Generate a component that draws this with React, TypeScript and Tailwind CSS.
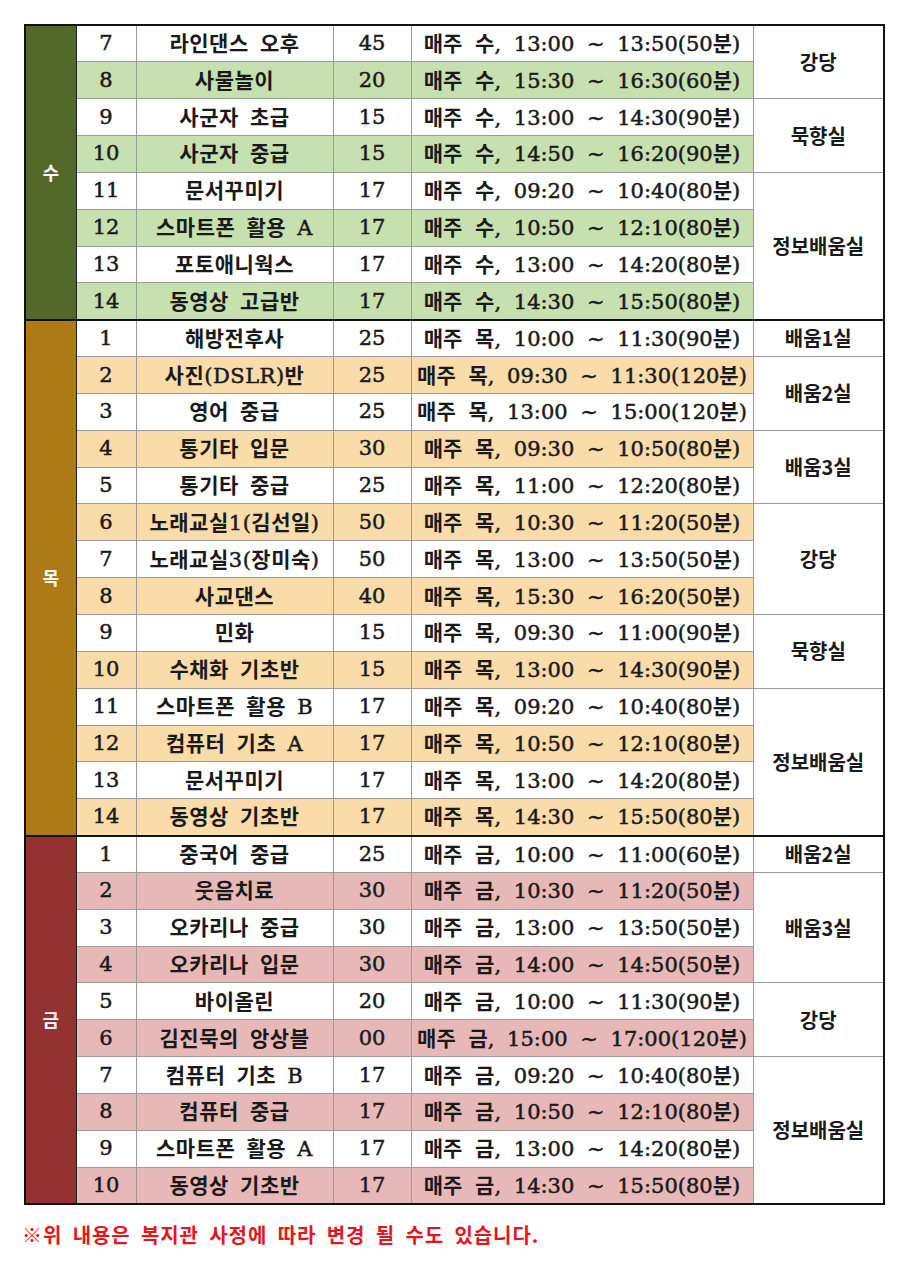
import React from 'react';

type Row = { no: string; name: string; count: string; time: string; room?: string; span?: number };

type Day = { label: string; dark: string; light: string; rows: Row[] };

const days: Day[] = [
  {
    label: '수',
    dark: 'bg-[#52692a]',
    light: 'bg-[#c6e0b0]',
    rows: [
      { no: '7', name: '라인댄스 오후', count: '45', time: '매주 수, 13:00 ~ 13:50(50분)', room: '강당', span: 2 },
      { no: '8', name: '사물놀이', count: '20', time: '매주 수, 15:30 ~ 16:30(60분)' },
      { no: '9', name: '사군자 초급', count: '15', time: '매주 수, 13:00 ~ 14:30(90분)', room: '묵향실', span: 2 },
      { no: '10', name: '사군자 중급', count: '15', time: '매주 수, 14:50 ~ 16:20(90분)' },
      { no: '11', name: '문서꾸미기', count: '17', time: '매주 수, 09:20 ~ 10:40(80분)', room: '정보배움실', span: 4 },
      { no: '12', name: '스마트폰 활용 A', count: '17', time: '매주 수, 10:50 ~ 12:10(80분)' },
      { no: '13', name: '포토애니웍스', count: '17', time: '매주 수, 13:00 ~ 14:20(80분)' },
      { no: '14', name: '동영상 고급반', count: '17', time: '매주 수, 14:30 ~ 15:50(80분)' },
    ],
  },
  {
    label: '목',
    dark: 'bg-[#ad7a16]',
    light: 'bg-[#f9dcaa]',
    rows: [
      { no: '1', name: '해방전후사', count: '25', time: '매주 목, 10:00 ~ 11:30(90분)', room: '배움1실', span: 1 },
      { no: '2', name: '사진(DSLR)반', count: '25', time: '매주 목, 09:30 ~ 11:30(120분)', room: '배움2실', span: 2 },
      { no: '3', name: '영어 중급', count: '25', time: '매주 목, 13:00 ~ 15:00(120분)' },
      { no: '4', name: '통기타 입문', count: '30', time: '매주 목, 09:30 ~ 10:50(80분)', room: '배움3실', span: 2 },
      { no: '5', name: '통기타 중급', count: '25', time: '매주 목, 11:00 ~ 12:20(80분)' },
      { no: '6', name: '노래교실1(김선일)', count: '50', time: '매주 목, 10:30 ~ 11:20(50분)', room: '강당', span: 3 },
      { no: '7', name: '노래교실3(장미숙)', count: '50', time: '매주 목, 13:00 ~ 13:50(50분)' },
      { no: '8', name: '사교댄스', count: '40', time: '매주 목, 15:30 ~ 16:20(50분)' },
      { no: '9', name: '민화', count: '15', time: '매주 목, 09:30 ~ 11:00(90분)', room: '묵향실', span: 2 },
      { no: '10', name: '수채화 기초반', count: '15', time: '매주 목, 13:00 ~ 14:30(90분)' },
      { no: '11', name: '스마트폰 활용 B', count: '17', time: '매주 목, 09:20 ~ 10:40(80분)', room: '정보배움실', span: 4 },
      { no: '12', name: '컴퓨터 기초 A', count: '17', time: '매주 목, 10:50 ~ 12:10(80분)' },
      { no: '13', name: '문서꾸미기', count: '17', time: '매주 목, 13:00 ~ 14:20(80분)' },
      { no: '14', name: '동영상 기초반', count: '17', time: '매주 목, 14:30 ~ 15:50(80분)' },
    ],
  },
  {
    label: '금',
    dark: 'bg-[#943232]',
    light: 'bg-[#e6b8b8]',
    rows: [
      { no: '1', name: '중국어 중급', count: '25', time: '매주 금, 10:00 ~ 11:00(60분)', room: '배움2실', span: 1 },
      { no: '2', name: '웃음치료', count: '30', time: '매주 금, 10:30 ~ 11:20(50분)', room: '배움3실', span: 3 },
      { no: '3', name: '오카리나 중급', count: '30', time: '매주 금, 13:00 ~ 13:50(50분)' },
      { no: '4', name: '오카리나 입문', count: '30', time: '매주 금, 14:00 ~ 14:50(50분)' },
      { no: '5', name: '바이올린', count: '20', time: '매주 금, 10:00 ~ 11:30(90분)', room: '강당', span: 2 },
      { no: '6', name: '김진묵의 앙상블', count: '00', time: '매주 금, 15:00 ~ 17:00(120분)' },
      { no: '7', name: '컴퓨터 기초 B', count: '17', time: '매주 금, 09:20 ~ 10:40(80분)', room: '정보배움실', span: 4 },
      { no: '8', name: '컴퓨터 중급', count: '17', time: '매주 금, 10:50 ~ 12:10(80분)' },
      { no: '9', name: '스마트폰 활용 A', count: '17', time: '매주 금, 13:00 ~ 14:20(80분)' },
      { no: '10', name: '동영상 기초반', count: '17', time: '매주 금, 14:30 ~ 15:50(80분)' },
    ],
  },
];

// hangul runs in bold gothic, the rest in a serif face like the original sheet
function Mixed({ text }: { text: string }) {
  const parts = text.split(/([가-힣]+)/);
  return (
    <>
      {parts.map((p, i) =>
        /[가-힣]/.test(p) ? (
          <span key={i} className="font-bold font-['Noto_Sans_CJK_KR',sans-serif]">
            {p}
          </span>
        ) : (
          <span key={i} className="font-normal [-webkit-text-stroke:0.5px_#1a1a1a]">
            {p}
          </span>
        )
      )}
    </>
  );
}

export default function App() {
  return (
    <div className="w-[905px] h-[1279px] bg-white text-[#1a1a1a] font-['DejaVu_Serif','Noto_Sans_CJK_KR',serif]">
      <div className="pl-[24px] pt-[24px]">
        <table className="border-collapse border-2 border-[#111] table-fixed w-[859px]">
          <colgroup>
            <col className="w-[51px]" />
            <col className="w-[60px]" />
            <col className="w-[197px]" />
            <col className="w-[78px]" />
            <col className="w-[342px]" />
            <col className="w-[131px]" />
          </colgroup>
          <tbody>
            {days.map((day) =>
              day.rows.map((row, i) => {
                const bg = i % 2 === 1 ? day.light : 'bg-white';
                const top = i === 0 ? 'border-t-2 border-t-[#111]' : '';
                const cell = `border border-[#9a9a9a] ${bg} ${top} text-center text-[21px] leading-none p-0 whitespace-nowrap`;
                return (
                  <tr key={day.label + row.no} className="h-[36.85px]">
                    {i === 0 && (
                      <td
                        rowSpan={day.rows.length}
                        className={`${day.dark} border-t-2 border-t-[#111] border-r border-r-[#222] text-center align-middle text-white font-bold text-[18px] font-['Noto_Sans_CJK_KR',sans-serif]`}
                      >
                        {day.label}
                      </td>
                    )}
                    <td className={cell}>
                      <Mixed text={row.no} />
                    </td>
                    <td className={`${cell} tracking-[0.5px] [word-spacing:4px]`}>
                      <Mixed text={row.name} />
                    </td>
                    <td className={cell}>
                      <Mixed text={row.count} />
                    </td>
                    <td className={`${cell} [word-spacing:6px]`}>
                      <Mixed text={row.time} />
                    </td>
                    {row.room && (
                      <td
                        rowSpan={row.span}
                        className={`border border-[#9a9a9a] bg-white ${top} text-center align-middle font-bold text-[20px] font-['Noto_Sans_CJK_KR',sans-serif]`}
                      >
                        {row.room}
                      </td>
                    )}
                  </tr>
                );
              })
            )}
          </tbody>
        </table>
        <p className="mt-[15px] -ml-[2px] text-[#e8141c] font-bold text-[20px] tracking-[0.9px] [word-spacing:5px] font-['Noto_Sans_CJK_KR',sans-serif]">
          ※위 내용은 복지관 사정에 따라 변경 될 수도 있습니다.
        </p>
      </div>
    </div>
  );
}
